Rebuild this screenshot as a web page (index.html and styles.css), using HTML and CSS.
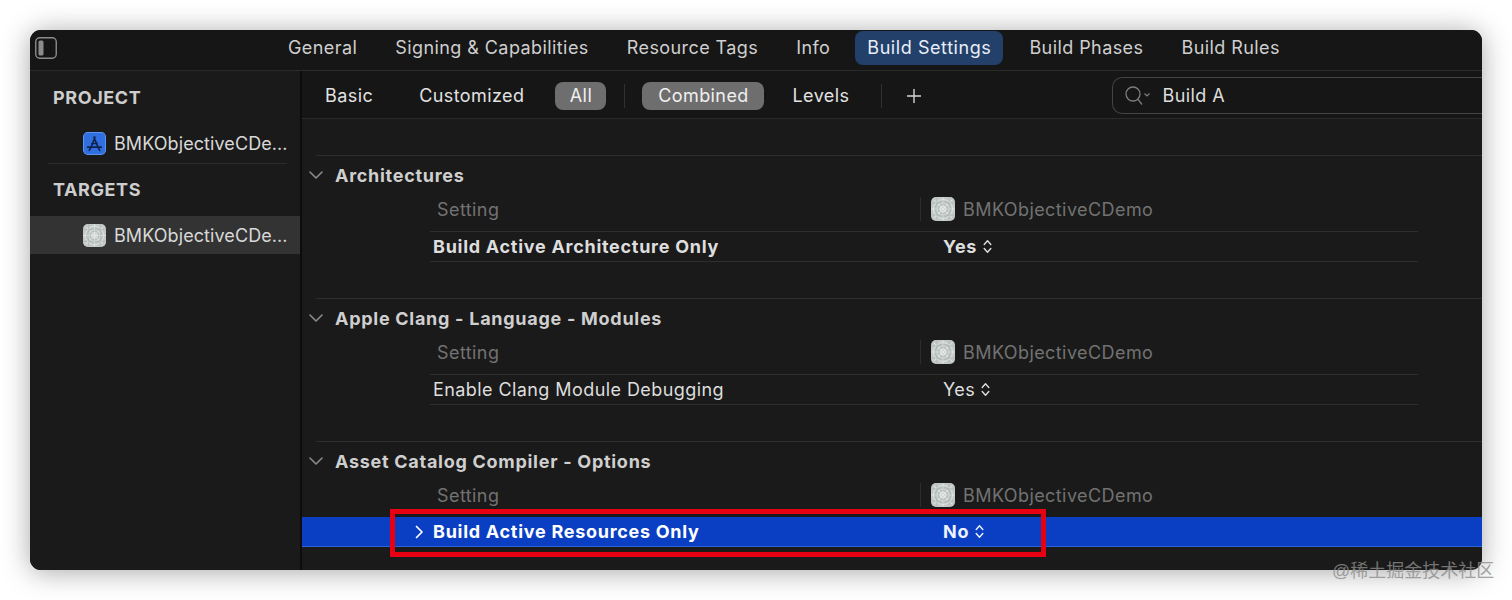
FILE: index.html
```html
<!DOCTYPE html>
<html lang="en">
<head>
<meta charset="utf-8">
<title>Build Settings</title>
<link rel="stylesheet" href="styles.css">
</head>
<body>
<svg class="defs" width="0" height="0" aria-hidden="true">
  <symbol id="target" viewBox="0 0 24 24">
    <rect width="24" height="24" rx="5" fill="#c4cac8"/>
    <g fill="none" stroke="#e6eae9" stroke-width=".8">
      <circle cx="12" cy="12" r="3"/><circle cx="12" cy="12" r="6"/><circle cx="12" cy="12" r="9.5"/>
      <path d="M0 12h24M12 0v24M3 3l18 18M21 3L3 21"/>
    </g>
    <g fill="none" stroke="#a3acaa" stroke-width=".5">
      <circle cx="12" cy="12" r="4.500"/><circle cx="12" cy="12" r="8"/><path d="M6 0v24M18 0v24M0 6h24M0 18h24"/>
    </g>
  </symbol>
  <symbol id="updown" viewBox="0 0 9 15">
    <path d="M1.200 5.500L4.500 1.800l3.300 3.700M1.200 9.500l3.300 3.700 3.300-3.700" fill="none" stroke="currentColor" stroke-width="1.400" stroke-linecap="round" stroke-linejoin="round"/>
  </symbol>
  <symbol id="chev" viewBox="0 0 14 8">
    <path d="M1 1l6 6 6-6" fill="none" stroke="currentColor" stroke-width="1.600" stroke-linecap="round" stroke-linejoin="round"/>
  </symbol>
</svg>
<div class="window">
  <header class="tabbar">
    <svg class="toggle" width="22" height="22" viewBox="0 0 22 22"><rect x=".75" y=".75" width="20.500" height="20.500" rx="4" fill="none" stroke="#8c8c8c" stroke-width="1.400"/><rect x="3.500" y="3.500" width="5" height="15" rx="1.500" fill="#8c8c8c"/></svg>
    <nav class="tabs">
      <span class="tab">General</span>
      <span class="tab">Signing &amp; Capabilities</span>
      <span class="tab">Resource Tags</span>
      <span class="tab">Info</span>
      <span class="tab tab-active">Build Settings</span>
      <span class="tab">Build Phases</span>
      <span class="tab">Build Rules</span>
    </nav>
  </header>
  <div class="body">
    <aside class="sidebar">
      <h2 class="side-title side-project">PROJECT</h2>
      <div class="side-item side-item-project">
        <svg class="side-icon" viewBox="0 0 22 22"><rect x=".5" y=".5" width="21" height="21" rx="4" fill="#2f6fe0" stroke="#5b93f0"/><path d="M11.500 5L7.500 15M10.500 5l4 10M4.500 14.500h13M8.500 11h5M6 17.500l1.200-2.200M16 17.500l-1.200-2.200" fill="none" stroke="#10244f" stroke-width="1.600" stroke-linecap="round"/></svg>
        <span>BMKObjectiveCDe...</span>
      </div>
      <h2 class="side-title side-targets">TARGETS</h2>
      <div class="side-item side-item-selected">
        <svg class="side-icon"><use href="#target"/></svg>
        <span>BMKObjectiveCDe...</span>
      </div>
    </aside>
    <main class="main">
      <div class="filterbar">
        <span class="filter">Basic</span>
        <span class="filter filter-customized">Customized</span>
        <span class="pill pill-all">All</span>
        <span class="vsep vsep-a"></span>
        <span class="pill pill-combined">Combined</span>
        <span class="filter filter-levels">Levels</span>
        <span class="vsep vsep-b"></span>
        <svg class="plus" width="16" height="16" viewBox="0 0 16 16"><path d="M8 1v14M1 8h14" stroke="#d6d6d6" stroke-width="1.400"/></svg>
        <div class="search">
          <svg class="search-icon" width="26" height="20" viewBox="0 0 26 20"><circle cx="8" cy="8" r="7" fill="none" stroke="#7d7d7d" stroke-width="1.300"/><path d="M12.800 13.200l4.200 5.300" stroke="#7d7d7d" stroke-width="1.300"/><path d="M19.500 7.500l2.500 2.500 2.500-2.500" fill="none" stroke="#7d7d7d" stroke-width="1.200"/></svg>
          <span>Build A</span>
        </div>
      </div>

      <section class="group">
        <h3 class="group-title"><svg class="chev"><use href="#chev"/></svg>Architectures</h3>
        <div class="row row-head"><span class="name">Setting</span><span class="val-head"><svg class="t-icon"><use href="#target"/></svg>BMKObjectiveCDemo</span></div>
        <div class="row row-line row-strong"><span class="name name-setting">Build Active Architecture Only</span><span class="value">Yes<svg class="updown"><use href="#updown"/></svg></span></div>
      </section>

      <section class="group">
        <h3 class="group-title"><svg class="chev"><use href="#chev"/></svg>Apple Clang - Language - Modules</h3>
        <div class="row row-head"><span class="name">Setting</span><span class="val-head"><svg class="t-icon"><use href="#target"/></svg>BMKObjectiveCDemo</span></div>
        <div class="row row-line"><span class="name name-setting">Enable Clang Module Debugging</span><span class="value">Yes<svg class="updown"><use href="#updown"/></svg></span></div>
      </section>

      <section class="group">
        <h3 class="group-title"><svg class="chev"><use href="#chev"/></svg>Asset Catalog Compiler - Options</h3>
        <div class="row row-head"><span class="name">Setting</span><span class="val-head"><svg class="t-icon"><use href="#target"/></svg>BMKObjectiveCDemo</span></div>
        <div class="row row-selected row-strong">
          <span class="name name-setting"><svg class="expand" width="9" height="14" viewBox="0 0 9 14"><path d="M1.500 1.500L7 7l-5.500 5.500" fill="none" stroke="#fff" stroke-width="1.700" stroke-linecap="round" stroke-linejoin="round"/></svg>Build Active Resources Only</span>
          <span class="value">No<svg class="updown"><use href="#updown"/></svg></span>
          <span class="highlight"></span>
        </div>
      </section>
    </main>
  </div>
</div>
<div class="watermark">@稀土掘金技术社区</div>
</body>
</html>
```
FILE: styles.css
```css
* { box-sizing: border-box; }
html, body { margin: 0; height: 600px; overflow: hidden; }
body {
  padding: 30px;
  background: #fff;
  position: relative;
  font-family: Inter, "Liberation Sans", "Noto Sans CJK SC", sans-serif;
  font-size: 18px;
  letter-spacing: .42px;
  color: #dcdcdc;
}
.defs { position: absolute; }
.window {
  width: 1452px;
  height: 540px;
  background: #1a1a1a;
  border-radius: 11px;
  overflow: hidden;
  box-shadow: 0 2px 28px rgba(0,0,0,.35);
  display: flex;
  flex-direction: column;
}
.tabbar {
  height: 41px;
  flex: none;
  display: flex;
  align-items: flex-start;
  background: #161616;
  border-bottom: 1px solid #2a2a2a;
  padding-left: 5px;
}
.toggle { margin-top: 7px; flex: none; }
.tabs { display: flex; gap: 14px; margin-left: 219px; }
.tab {
  height: 34px;
  padding: 0 12px;
  display: flex;
  align-items: center;
  color: #cfcfcf;
  white-space: nowrap;
}
.tab-active {
  margin: 1px 0 0 -1px;
  padding-bottom: 2px;
  background: #23406b;
  color: #e8eef8;
  border-radius: 8px;
  letter-spacing: .57px;
}
.body { flex: 1; display: flex; min-height: 0; }
.sidebar {
  width: 272px;
  flex: none;
  background: #1a1a1a;
  border-right: 2px solid #0c0c0c;
  padding-top: 14px;
}
.side-title {
  margin: 0 0 0 23px;
  font-size: 18px;
  line-height: 26px;
  font-weight: 700;
  letter-spacing: .6px;
  color: #cdcdcd;
}
.side-targets { padding-top: 9px; height: 38px; }
.side-item {
  display: flex;
  align-items: center;
  gap: 8px;
  padding-left: 53px;
  height: 38px;
  color: #d8d8d8;
  white-space: nowrap;
  letter-spacing: .08px;
}
.side-item-project { margin: 13px 13px 6px 18px; padding-left: 35px; position: relative; }
.side-item-project::after {
  content: "";
  position: absolute;
  left: 0; right: 0; bottom: -2px;
  height: 1px;
  background: #2c2c2c;
}
.side-item-selected { margin-top: 10px; background: #333; }
.side-icon { width: 23px; height: 23px; flex: none; }
.main { flex: 1; min-width: 0; }
.filterbar {
  height: 48px;
  display: flex;
  align-items: center;
  border-bottom: 1px solid #2a2a2a;
  padding: 2px 0 0 23px;
  background: #161616;
  color: #e2e2e2;
}
.filter { white-space: nowrap; }
.filter-customized { margin-left: 46px; }
.filter-levels { margin-left: 28px; }
.pill {
  height: 28px;
  display: flex;
  align-items: center;
  justify-content: center;
  background: #6e6e6e;
  border-radius: 8px;
  color: #f0f0f0;
}
.pill-all { width: 51px; margin-left: 31px; }
.pill-combined { width: 122px; }
.vsep { width: 1px; height: 24px; background: #303030; }
.vsep-a { margin: 0 17px 0 18px; }
.vsep-b { margin: 0 24px 0 32px; }
.plus { flex: none; }
.search {
  flex: 1;
  height: 37px;
  margin-left: 190px;
  display: flex;
  align-items: center;
  gap: 11px;
  padding-left: 12px;
  border: 1px solid #444;
  border-right: 0;
  border-radius: 10px 0 0 10px;
  color: #dedede;
}
.group {
  margin: 37px 0 0 14px;
  border-top: 1px solid #2e2e2e;
  height: 106px;
}
.filterbar + .group { margin-top: 36px; }
.group-title {
  margin: 0 0 0 -14px;
  height: 38px;
  display: flex;
  align-items: center;
  font-size: 18px;
  font-weight: 700;
  letter-spacing: .72px;
  color: #cfcfcf;
  padding-left: 33px;
  position: relative;
}
.chev { width: 14px; height: 8px; position: absolute; left: 7px; top: 15px; color: #8a8a8a; }
.row {
  display: grid;
  grid-template-columns: 490px 1fr;
  align-items: center;
  margin-left: 114px;
  width: 988px;
  position: relative;
}
.row-head { height: 37px; padding-bottom: 7px; }
.row-head .name { padding-left: 7px; color: #727272; }
.val-head { display: flex; align-items: center; height: 24px; padding-left: 10px; gap: 8px; color: #727272; border-left: 1px solid #2c2c2c; }
.t-icon { width: 24px; height: 24px; flex: none; }
.row-line {
  height: 31px;
  border-top: 1px solid #2e2e2e;
  border-bottom: 1px solid #2e2e2e;
}
.name-setting { padding-left: 3px; color: #dedede; }
.value { padding-left: 23px; display: flex; align-items: center; gap: 6px; color: #dedede; }
.row-strong { font-weight: 700; letter-spacing: .72px; }
.updown { width: 9px; height: 15px; }
.row-selected {
  height: 30px;
  margin: 0 0 0 -14px;
  width: 1180px;
  padding-left: 128px;
  background: #0a3fc4;
  border-bottom: 1px solid #2f62d8;
  color: #fff;
}
.row-selected .name-setting { color: #fff; position: relative; }
.row-selected .value { color: #eef2ff; }
.expand { position: absolute; left: -15px; top: 4px; }
.highlight {
  position: absolute;
  left: 88px; top: -8px;
  width: 656px; height: 48px;
  border: 5px solid #e60012;
}
.watermark {
  position: absolute;
  left: 1332px; top: 558px;
  font-family: "Liberation Sans", "Noto Sans CJK SC", sans-serif;
  font-size: 18px;
  line-height: 26px;
  letter-spacing: 0;
  color: rgba(140,140,140,.8);
  white-space: nowrap;
}
```
